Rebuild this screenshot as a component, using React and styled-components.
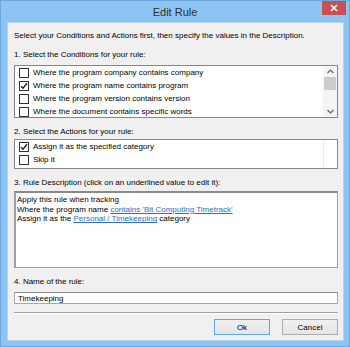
import React from "react";
import styled, { createGlobalStyle } from "styled-components";

const GlobalStyle = createGlobalStyle`
  html, body {
    margin: 0;
    padding: 0;
    background: #8dc4f4;
  }
  * {
    box-sizing: border-box;
  }
`;

const conditions = [
  { label: "Where the program company contains company", checked: false },
  { label: "Where the program name contains program", checked: true },
  { label: "Where the program version contains version", checked: false },
  { label: "Where the document contains specific words", checked: false },
];

const actions = [
  { label: "Assign it as the specified category", checked: true },
  { label: "Skip it", checked: false },
];

function Check({ checked }) {
  return (
    <Box>
      {checked && (
        <svg width="8" height="8" viewBox="0 0 8 8">
          <path d="M1 4.2 L3 6.3 L7 1.2" fill="none" stroke="#222" strokeWidth="1.4" />
        </svg>
      )}
    </Box>
  );
}

export default function App() {
  return (
    <>
      <GlobalStyle />
      <Window>
        <TitleBar>
          <span />
          <Title>Edit Rule</Title>
          <CloseButton>
            <svg width="8" height="8" viewBox="0 0 8 8">
              <path d="M1 1 L7 7 M7 1 L1 7" stroke="#fff" strokeWidth="1.6" />
            </svg>
          </CloseButton>
        </TitleBar>
        <Client>
          <Intro>Select your Conditions and Actions first, then specify the values in the Description.</Intro>

          <Label>1. Select the Conditions for your rule:</Label>
          <ListBox $height={53}>
            <Rows>
              {conditions.map((c) => (
                <Row key={c.label}>
                  <Check checked={c.checked} />
                  {c.label}
                </Row>
              ))}
            </Rows>
            <ScrollBar>
              <Arrow>
                <svg width="7" height="5" viewBox="0 0 7 5">
                  <path d="M0.5 4 L3.5 1 L6.5 4" fill="none" stroke="#606060" strokeWidth="1.2" />
                </svg>
              </Arrow>
              <Track>
                <Thumb />
              </Track>
              <Arrow>
                <svg width="7" height="5" viewBox="0 0 7 5">
                  <path d="M0.5 1 L3.5 4 L6.5 1" fill="none" stroke="#606060" strokeWidth="1.2" />
                </svg>
              </Arrow>
            </ScrollBar>
          </ListBox>

          <Label>2. Select the Actions for your rule:</Label>
          <ListBox $height={30} $gap={2}>
            <Rows>
              {actions.map((a) => (
                <Row key={a.label}>
                  <Check checked={a.checked} />
                  {a.label}
                </Row>
              ))}
            </Rows>
            <EmptyTrack />
          </ListBox>

          <Label>3. Rule Description (click on an underlined value to edit it):</Label>
          <Description>
            <div>Apply this rule when tracking</div>
            <div>
              Where the program name <LinkText>contains 'Bit Computing Timetrack'</LinkText>
            </div>
            <div>
              Assign it as the <LinkText>Personal / Timekeeping</LinkText> category
            </div>
          </Description>

          <Label>4. Name of the rule:</Label>
          <NameInput defaultValue="Timekeeping" />

          <Separator />

          <ButtonRow>
            <Button $primary>Ok</Button>
            <Button>Cancel</Button>
          </ButtonRow>
        </Client>
      </Window>
    </>
  );
}

const Window = styled.div`
  width: 350px;
  height: 347px;
  background: #8dc4f4;
  border: 1px solid #6aa8e0;
  display: flex;
  flex-direction: column;
  font-family: "Liberation Sans", Arial, sans-serif;
  font-size: 8px;
  color: #000;
`;

const TitleBar = styled.div`
  height: 21px;
  display: grid;
  grid-template-columns: 1fr auto 1fr;
  align-items: start;
`;

const Title = styled.div`
  font-size: 11px;
  color: #2f2f2f;
  line-height: 12px;
  margin-top: 5px;
`;

const CloseButton = styled.div`
  justify-self: end;
  width: 24px;
  height: 14px;
  margin-right: 3px;
  background: #c75050;
  display: flex;
  align-items: center;
  justify-content: center;
`;

const Client = styled.div`
  margin: 0 5px 0 6px;
  flex: 1;
  margin-bottom: 5px;
  background: #f0f0f0;
  border: 1px solid #b9d5ee;
  padding: 7px 5px 0 6px;
  display: flex;
  flex-direction: column;
`;

const Intro = styled.div`
  line-height: 11px;
  white-space: nowrap;
`;

const Label = styled.div`
  line-height: 11px;
  margin-top: 8px;
  white-space: nowrap;
`;

const ListBox = styled.div`
  height: ${(p) => p.$height}px;
  margin-top: ${(p) => (p.$gap ?? 5)}px;
  background: #fff;
  border: 1px solid #828790;
  display: flex;
`;

const Rows = styled.div`
  flex: 1;
  overflow: hidden;
`;

const Row = styled.div`
  height: 13px;
  display: flex;
  align-items: center;
  gap: 4px;
  padding-left: 4px;
  white-space: nowrap;
`;

const Box = styled.span`
  width: 10px;
  height: 10px;
  border: 1px solid #333;
  background: #fff;
  display: flex;
  align-items: center;
  justify-content: center;
  flex-shrink: 0;
`;

const ScrollBar = styled.div`
  width: 14px;
  background: #f4f4f4;
  display: flex;
  flex-direction: column;
  align-items: center;
`;

const Arrow = styled.div`
  height: 11px;
  display: flex;
  align-items: center;
  justify-content: center;
`;

const Track = styled.div`
  flex: 1;
  width: 100%;
  padding: 0 1px;
`;

const Thumb = styled.div`
  height: 13px;
  background: #cdcdcd;
`;

const EmptyTrack = styled.div`
  width: 14px;
  border-left: 1px solid #ebebeb;
`;

const Description = styled.div`
  height: 77px;
  margin-top: 3px;
  background: #fff;
  border: 1px solid #a0a0a0;
  border-top: 2px solid #8a8a8a;
  border-left: 2px solid #a0a0a0;
  padding: 2px 1px;
  line-height: 9.6px;
  white-space: nowrap;
`;

const LinkText = styled.span`
  color: #2b70cf;
  text-decoration: underline;
`;

const NameInput = styled.input`
  height: 12px;
  margin-top: 5px;
  border: 1px solid #a8a8a8;
  border-top-color: #8c8c8c;
  background: #fff;
  padding: 0 3px;
  font-family: "Liberation Sans", Arial, sans-serif;
  font-size: 8px;
  color: #000;
  outline: none;
`;

const Separator = styled.div`
  margin-top: 8px;
  height: 2px;
  border-top: 1px solid #a0a0a0;
  border-bottom: 1px solid #fff;
`;

const ButtonRow = styled.div`
  margin-top: 5px;
  display: flex;
  justify-content: flex-end;
  gap: 12px;
`;

const Button = styled.div`
  width: 56px;
  height: 16px;
  display: flex;
  align-items: center;
  justify-content: center;
  border: 1px solid ${(p) => (p.$primary ? "#5ea7e8" : "#acacac")};
  background: linear-gradient(#f0f0f0, #e5e5e5);
  font-size: 8px;
`;
